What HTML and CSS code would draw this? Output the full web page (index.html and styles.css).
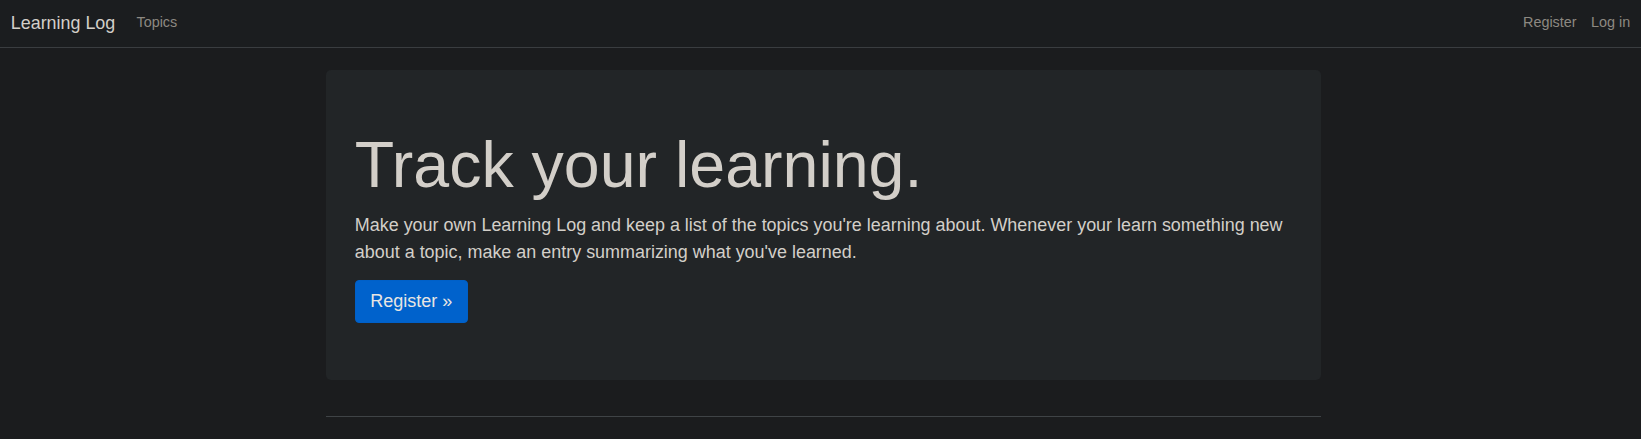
FILE: index.html
```html
<!DOCTYPE html>
<html lang="en">
<head>
<meta charset="utf-8">
<title>Learning Log</title>
<link rel="stylesheet" href="styles.css">
</head>
<body>
<nav class="navbar">
  <div class="nav-left">
    <a class="brand" href="#">Learning Log</a>
    <a class="nav-link" href="#">Topics</a>
  </div>
  <div class="nav-right">
    <a class="nav-link" href="#">Register</a>
    <a class="nav-link last" href="#">Log in</a>
  </div>
</nav>
<main class="container">
  <section class="hero">
    <h1 class="hero-title">Track your learning.</h1>
    <p class="hero-lead">Make your own Learning Log and keep a list of the topics you're learning about. Whenever your learn something new about a topic, make an entry summarizing what you've learned.</p>
    <a class="btn" href="#">Register &raquo;</a>
  </section>
  <hr class="rule">
</main>
</body>
</html>
```

FILE: styles.css
```css
* { box-sizing: border-box; }
html, body {
  margin: 0;
  padding: 0;
}
body {
  background: #1b1c1e;
  color: #d3cfc9;
  font-family: "Liberation Sans", Arial, sans-serif;
  font-size: 14.4px;
  line-height: 1.5;
}
a { text-decoration: none; }

.navbar {
  display: flex;
  align-items: center;
  justify-content: space-between;
  height: 48px;
  padding: 0 10.8px 1px;
  background: #1b1d1f;
  border-bottom: 1px solid #3a3d40;
}
.nav-left, .nav-right {
  display: flex;
  align-items: center;
}
.brand {
  font-size: 17.9px;
  line-height: 27px;
  color: #d3cfc9;
  margin-right: 14px;
}
.nav-link {
  font-size: 14.4px;
  line-height: 21.6px;
  color: #8d8982;
  padding: 0 7.2px;
}
.nav-link.last { padding-right: 0; }

.container {
  width: 995px;
  margin: 0 0 0 326px;
}
.hero {
  margin-top: 22px;
  background: #222527;
  border-radius: 5px;
  padding: 57px 28.8px 56.4px;
}
.hero-title {
  margin: 0 0 7.2px;
  font-size: 64.5px;
  font-weight: 300;
  line-height: 1.2;
  color: #d3cfc9;
}
.hero-lead {
  margin: 0 0 14.4px;
  font-size: 17.95px;
  line-height: 27px;
  font-weight: 300;
  color: #d3cfc9;
}
.btn {
  display: inline-block;
  font-size: 18px;
  line-height: 27px;
  padding: 7.2px 14.4px;
  border: 0.9px solid #0060c8;
  border-radius: 4px;
  background: #0062cc;
  color: #e8e6e3;
}
.rule {
  margin: 36px 0 14.4px;
  border: 0;
  border-top: 1px solid #3f4346;
  height: 0;
}
```
